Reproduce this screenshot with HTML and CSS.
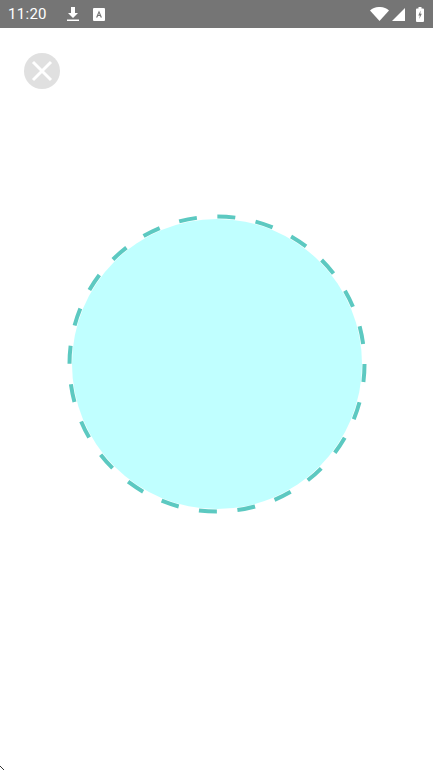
FILE: index.html
```html
<!DOCTYPE html>
<html lang="en">
<head>
<meta charset="utf-8">
<title>Capture</title>
<link rel="stylesheet" href="styles.css">
</head>
<body>
<div class="screen">
  <header class="status-bar">
    <span class="clock">11:20</span>
    <svg class="ic-download" width="14" height="16" viewBox="0 0 14 16"><path d="M5 1h4v6h3L7 12 2 7h3z" fill="#fff"/><rect x="1" y="13.500" width="12" height="1.500" fill="#fff"/></svg>
    <svg class="ic-a" width="12" height="13" viewBox="0 0 12 13"><path d="M1 0h10a1 1 0 0 1 1 1v11a1 1 0 0 1-1 1H1a1 1 0 0 1-1-1V1a1 1 0 0 1 1-1z" fill="#fff"/><path d="M6 2.500 9 9.500H7.600L7 8H5L4.400 9.500H3zM5.400 7h1.200L6 5z" fill="#757575"/></svg>
    <span class="spacer"></span>
    <svg class="ic-wifi" width="19" height="14" viewBox="0 0 19 14"><path d="M0 3.500C5-1.200 14-1.200 19 3.500L9.500 14z" fill="#fff"/></svg>
    <svg class="ic-signal" width="13" height="13" viewBox="0 0 13 13"><path d="M13 0v13H0z" fill="#fff"/></svg>
    <svg class="ic-battery" width="8" height="15" viewBox="0 0 8 15"><path d="M2.500 0h3v1.500H7a1 1 0 0 1 1 1V14a1 1 0 0 1-1 1H1a1 1 0 0 1-1-1V2.500a1 1 0 0 1 1-1h1.500z" fill="#fff"/><path d="M4.600 3.500 2.300 8.500h1.500L3.300 12 5.800 6.800H4.300z" fill="#757575"/></svg>
  </header>
  <main class="content">
    <button class="close" type="button" aria-label="Close">
      <svg width="36" height="36" viewBox="0 0 36 36"><circle cx="18" cy="18" r="18" fill="#e0e0e0"/><path d="M9 9 27 27M27 9 9 27" stroke="#fff" stroke-width="3" fill="none"/></svg>
    </button>
    <svg class="ring" width="300" height="300" viewBox="0 0 300 300">
      <circle cx="150" cy="150" r="145" fill="#c0ffff"/>
      <circle cx="150" cy="150" r="147.500" fill="none" stroke="#5cc9c1" stroke-width="4" stroke-dasharray="18 20.620"/>
    </svg>
  </main>
  <svg class="corner" width="6" height="5" viewBox="0 0 6 5"><path d="M0 0 4 4" stroke="#333" stroke-width="1" fill="none"/></svg>
</div>
</body>
</html>
```
FILE: styles.css
```css
html, body {
  margin: 0;
  padding: 0;
  background: #fff;
}
.screen {
  position: relative;
  width: 433px;
  height: 771px;
  overflow: hidden;
  font-family: Roboto, "Liberation Sans", sans-serif;
}
.status-bar {
  display: flex;
  align-items: center;
  height: 28px;
  padding: 0 9px 0 8px;
  background: #757575;
  color: #fff;
}
.clock {
  font-size: 15px;
  letter-spacing: 0.3px;
  width: 58px;
}
.status-bar svg { display: block; flex: none; }
.ic-download { margin-right: 13px; }
.spacer { flex: 1; }
.ic-wifi { margin-right: 3px; }
.ic-signal { margin-right: 11px; }
.content {
  display: flex;
  flex-direction: column;
  padding: 25px 0 0 24px;
}
.close {
  width: 36px;
  height: 36px;
  padding: 0;
  border: 0;
  background: none;
}
.close svg { display: block; }
.ring {
  display: block;
  margin: 125px 0 0 42.500px;
}
.corner {
  position: absolute;
  left: 0;
  bottom: 0;
}
```
